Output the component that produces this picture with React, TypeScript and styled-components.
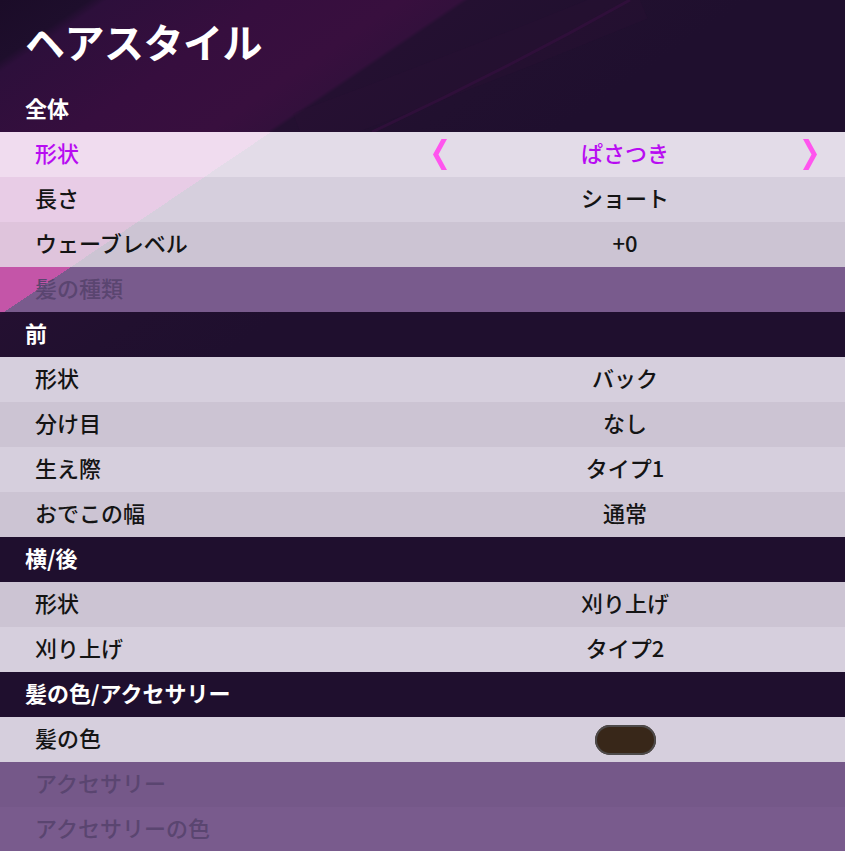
import React from 'react';
import styled, { createGlobalStyle, css } from 'styled-components';

const GlobalStyle = createGlobalStyle`
  html, body { margin: 0; padding: 0; background: #1f0f2e; }
  body { font-family: "Noto Sans CJK JP", "Noto Sans", sans-serif; }
  * { box-sizing: border-box; }
`;

const ANGLE = '146deg';
const EDGE = 261;

const tinted = (tint: string, base: string) => css`
  background-color: ${base};
  background-image: linear-gradient(${ANGLE}, ${tint} 0px, ${tint} ${EDGE}px, ${base} ${EDGE}px, ${base} 100%);
  background-attachment: fixed;
`;

const darkBg = css`
  background-color: #1f0f2e;
  background-image: linear-gradient(
    ${ANGLE},
    #1b0c28 0px,
    #1e0e2c 50px,
    #2d0f3b 60px,
    #360e3e 150px,
    #380f3e 225px,
    #33103c 258px,
    #241031 ${EDGE + 1}px,
    #21102f 340px,
    #1f0f2e 420px
  );
  background-attachment: fixed;
`;

type Variant = 'selected' | 'light' | 'dark' | 'disabledLight' | 'disabledDark';

const variantBg: Record<Variant, ReturnType<typeof css>> = {
  selected: tinted('#f0dcef', '#e3dce8'),
  light: tinted('#e8cce6', '#d6cfdd'),
  dark: tinted('#dfc4dc', '#ccc4d3'),
  disabledLight: tinted('#c455a8', '#795b8d'),
  disabledDark: tinted('#c253a6', '#755889'),
};

const variantText: Record<Variant, string> = {
  selected: '#b80cf2',
  light: '#141414',
  dark: '#141414',
  disabledLight: '#5a4570',
  disabledDark: '#5a4570',
};

const Page = styled.div`
  width: 845px;
  min-height: 851px;
  display: flex;
  flex-direction: column;
  ${darkBg};
`;

const HeaderBlock = styled.header`
  position: relative;
  display: flex;
  flex-direction: column;
  overflow: hidden;
`;

const HeaderArt = styled.svg`
  position: absolute;
  inset: 0;
  width: 100%;
  height: 100%;
  pointer-events: none;
`;

const Title = styled.h1`
  position: relative;
  margin: 0;
  height: 87px;
  padding: 0 0 5px 25px;
  display: flex;
  align-items: center;
  color: #ffffff;
  font-size: 40px;
  line-height: 1;
  font-weight: 700;
  letter-spacing: -0.5px;
`;

const SectionRow = styled.div<{ $bare?: boolean }>`
  position: relative;
  height: 45px;
  padding: 0 0 6px 25px;
  display: flex;
  align-items: center;
  color: #ffffff;
  font-size: 22px;
  line-height: 1;
  font-weight: 700;
  ${(p) => (p.$bare ? 'background: transparent;' : darkBg)};
`;

const Row = styled.div<{ $v: Variant }>`
  height: 45px;
  padding: 0 25px 5px 35px;
  display: grid;
  grid-template-columns: 1fr 390px;
  align-items: center;
  font-size: 22px;
  line-height: 1;
  font-weight: 500;
  color: ${(p) => variantText[p.$v]};
  ${(p) => variantBg[p.$v]};
`;

const Label = styled.span`
  white-space: nowrap;
`;

const ValueCell = styled.div`
  display: grid;
  grid-template-columns: 20px 1fr 20px;
  align-items: center;
  height: 100%;
`;

const ValueText = styled.span<{ $v: Variant }>`
  grid-column: 2;
  justify-self: center;
  white-space: nowrap;
  color: ${(p) => variantText[p.$v]};
`;

const ArrowSlot = styled.span<{ $side: 'left' | 'right' }>`
  display: flex;
  justify-self: ${(p) => (p.$side === 'left' ? 'start' : 'end')};
  margin: ${(p) => (p.$side === 'left' ? '4px 0 0 3px' : '4px 3px 0 0')};
  grid-column: ${(p) => (p.$side === 'left' ? 1 : 3)};
`;

const Swatch = styled.span`
  grid-column: 2;
  justify-self: center;
  width: 61px;
  height: 30px;
  margin-top: 5px;
  border-radius: 15px;
  background: #382719;
  box-shadow: inset 0 0 0 2px #4d4a4a;
`;

const Arrow: React.FC<{ side: 'left' | 'right' }> = ({ side }) => (
  <ArrowSlot $side={side}>
    <svg width="14" height="31" viewBox="0 0 14 31">
      {side === 'left' ? (
        <polygon points="14,0 8.5,0 0,15.5 8.5,31 14,31 5.5,15.5" fill="#ff55ee" />
      ) : (
        <polygon points="0,0 5.5,0 14,15.5 5.5,31 0,31 8.5,15.5" fill="#ff55ee" />
      )}
    </svg>
  </ArrowSlot>
);

type Entry =
  | { kind: 'section'; label: string }
  | {
      kind: 'item';
      label: string;
      value?: string;
      selected?: boolean;
      disabled?: boolean;
      swatch?: boolean;
    };

const entries: Entry[] = [
  { kind: 'section', label: '全体' },
  { kind: 'item', label: '形状', value: 'ぱさつき', selected: true },
  { kind: 'item', label: '長さ', value: 'ショート' },
  { kind: 'item', label: 'ウェーブレベル', value: '+0' },
  { kind: 'item', label: '髪の種類', disabled: true },
  { kind: 'section', label: '前' },
  { kind: 'item', label: '形状', value: 'バック' },
  { kind: 'item', label: '分け目', value: 'なし' },
  { kind: 'item', label: '生え際', value: 'タイプ1' },
  { kind: 'item', label: 'おでこの幅', value: '通常' },
  { kind: 'section', label: '横/後' },
  { kind: 'item', label: '形状', value: '刈り上げ' },
  { kind: 'item', label: '刈り上げ', value: 'タイプ2' },
  { kind: 'section', label: '髪の色/アクセサリー' },
  { kind: 'item', label: '髪の色', swatch: true },
  { kind: 'item', label: 'アクセサリー', disabled: true },
  { kind: 'item', label: 'アクセサリーの色', disabled: true },
];

const variantFor = (e: Extract<Entry, { kind: 'item' }>, index: number): Variant => {
  const light = index % 2 === 0;
  if (e.selected) return 'selected';
  if (e.disabled) return light ? 'disabledLight' : 'disabledDark';
  return light ? 'light' : 'dark';
};

const renderEntry = (e: Entry, i: number, bare = false) => {
  if (e.kind === 'section') {
    return (
      <SectionRow key={i} $bare={bare}>
        {e.label}
      </SectionRow>
    );
  }
  const v = variantFor(e, i);
  return (
    <Row key={i} $v={v}>
      <Label>{e.label}</Label>
      <ValueCell>
        {e.selected && <Arrow side="left" />}
        {e.value && <ValueText $v={v}>{e.value}</ValueText>}
        {e.swatch && <Swatch />}
        {e.selected && <Arrow side="right" />}
      </ValueCell>
    </Row>
  );
};

export default function App() {
  return (
    <>
      <GlobalStyle />
      <Page>
        <HeaderBlock>
          <HeaderArt viewBox="0 0 845 132" preserveAspectRatio="none">
            <path d="M 300 132 Q 470 70 640 0" stroke="#2a1036" strokeWidth="40" fill="none" opacity="0.3" />
            <path d="M 372 132 Q 505 70 630 0" stroke="#34103e" strokeWidth="3" fill="none" opacity="0.7" />
          </HeaderArt>
          <Title>ヘアスタイル</Title>
          {renderEntry(entries[0], 0, true)}
        </HeaderBlock>
        {entries.slice(1).map((e, k) => renderEntry(e, k + 1))}
      </Page>
    </>
  );
}
